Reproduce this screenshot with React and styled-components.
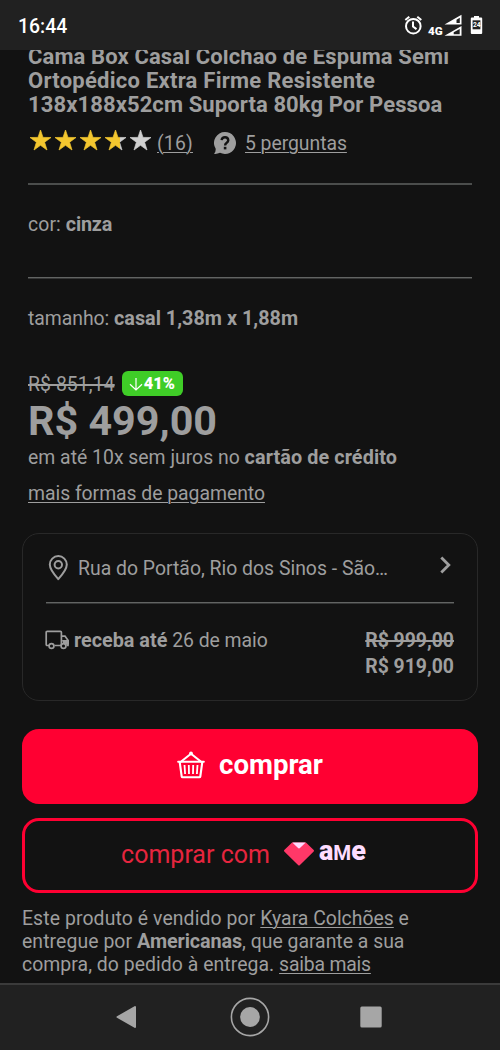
import styled, {createGlobalStyle} from "styled-components";

const GlobalStyle = createGlobalStyle`
    * {
        box-sizing: border-box;
    }

    body {
        margin: 0;
        background: #121212;
        color: #9e9e9e;
        font-family: Roboto, sans-serif;
        font-size: 19.4px;
    }
`;

const Screen = styled.div`
    display: flex;
    flex-direction: column;
    width: 500px;
    height: 1050px;
    overflow: hidden;
`;

const StatusBar = styled.header`
    display: flex;
    align-items: center;
    height: 50px;
    flex: none;
    padding: 2px 17px 0 18px;
    background: #212121;
    color: #fff;
`;

const Clock = styled.span`
    flex: 1;
    padding-top: 2px;
    font-size: 19.4px;
    font-weight: 500;
    line-height: 24px;
`;

const Main = styled.main`
    flex: 1;
    min-height: 0;
    overflow: hidden;
    padding: 0 22px;
`;

const Inner = styled.div`
    padding: 0 6px;
`;

const Title = styled.h1`
    margin: -5px 0 0;
    height: 71px;
    font-size: 22px;
    font-weight: 700;
    line-height: 24.2px;
    white-space: nowrap;
`;

const TitleLine = styled.span`
    display: block;
    letter-spacing: ${({$track}) => $track}px;
`;

const Text = styled.span`
    letter-spacing: ${({$track}) => $track || 0}px;
    white-space: pre;
`;

const Strong = styled(Text)`
    font-size: 19.8px;
    font-weight: 700;
`;

const Anchor = styled.a`
    color: inherit;
    letter-spacing: ${({$track}) => $track || 0}px;
    text-decoration: underline;
    text-decoration-thickness: 1px;
    text-underline-offset: 2px;
`;

const Rating = styled.div`
    display: flex;
    align-items: center;
    height: 26px;
    margin-top: 14px;
`;

const Stars = styled.svg`
    margin: 0 4px 6px 0;
`;

const Bubble = styled.svg`
    margin: 0 9px 0 21px;
`;

const Divider = styled.hr`
    height: 2px;
    margin: 0;
    border: 0;
    background: ${({$sharp}) => ($sharp ? "linear-gradient(#626463 50%, #353636 50%)" : "#4b4d4c")};
`;

const Attribute = styled.div`
    height: 92px;
    padding-top: 27px;
    line-height: 26px;
`;

const OldPrice = styled.div`
    display: flex;
    align-items: center;
    height: 25px;
`;

const Strike = styled(Text)`
    text-decoration: line-through;
    text-decoration-thickness: 1.5px;
`;

const OldValue = styled(Strike)`
    padding-top: 1px;
`;

const Discount = styled.span`
    display: flex;
    align-items: center;
    width: 61px;
    height: 25px;
    margin-left: 7px;
    padding-left: 7px;
    border-radius: 6px;
    background: #3fcd27;
    color: #fff;
    font-size: 16.4px;
    font-weight: 900;
`;

const Price = styled.div`
    height: 49px;
    padding-top: 1px;
    font-size: 41.3px;
    font-weight: 700;
    line-height: 49px;
    white-space: nowrap;
`;

const Installments = styled.div`
    line-height: 26px;
    white-space: nowrap;
`;

const PaymentLink = styled.div`
    margin-top: 10px;
    line-height: 26px;
`;

const Card = styled.section`
    height: 168px;
    margin-top: 26px;
    padding: 0 23px;
    border: 1.5px solid #282828;
    border-radius: 17px;
`;

const Address = styled.div`
    display: flex;
    align-items: center;
    height: 68px;
    white-space: nowrap;
`;

const Street = styled.span`
    flex: 1;
    margin-left: 8px;
`;

const Shipping = styled.div`
    display: flex;
    align-items: flex-start;
    padding-top: 24px;
    line-height: 26px;
`;

const ShippingDate = styled.div`
    flex: 1;
    margin-left: 5px;
    white-space: nowrap;
`;

const Prices = styled.div`
    display: flex;
    flex-direction: column;
    font-weight: 700;
`;

const Button = styled.button`
    display: flex;
    align-items: center;
    justify-content: center;
    width: 100%;
    height: 75px;
    padding: 0 ${({$solid}) => ($solid ? 0 : 13)}px 3px 0;
    border: 3px solid #ff0032;
    border-radius: 17px;
    background: ${({$solid}) => ($solid ? "#ff0032" : "transparent")};
    color: ${({$solid}) => ($solid ? "#fff" : "#e6253e")};
    font-family: inherit;
    font-size: ${({$solid}) => ($solid ? 27.6 : 25)}px;
    font-weight: ${({$solid}) => ($solid ? 700 : 400)};
`;

const Actions = styled.div`
    display: grid;
    gap: 14px;
    margin-top: 28px;
`;

const BuyLabel = styled.span`
    margin: -2px 0 0 14px;
`;

const AmeLogo = styled.span`
    display: flex;
    align-items: center;
    margin: 0 0 0 13px;
    color: #fddcff;
`;

const Wordmark = styled.span`
    margin: -4px 0 0 4px;
    font-size: 27px;
    font-weight: 900;
    line-height: 26px;
`;

const WordmarkCap = styled.span`
    font-size: 20.5px;
    font-weight: 700;
`;

const Seller = styled.p`
    margin: 14px 0 0;
    line-height: 23px;
    white-space: nowrap;
`;

const NavBar = styled.nav`
    display: flex;
    align-items: center;
    flex: none;
    height: 67px;
    padding: 0 118px 2px 116px;
    justify-content: space-between;
    border-top: 2px solid #3b3b3b;
    background: #212121;
`;

const HomeButton = styled.svg`
    margin-left: 2px;
`;

const Chevron = styled.svg`
    margin-top: -7px;
`;

const Truck = styled.svg`
    margin-top: 2px;
`;

const starPath = "M10.5 0l2.5 7.4 8 .1-6.4 4.7 2.4 7.8-6.5-4.7-6.5 4.7 2.4-7.8L0 7.5l8-.1z";

const StatusIcons = () => (
    <svg width="70" height="24" viewBox="413 14 70 24" overflow="visible" fill="none">
        <g stroke="#fff" strokeWidth="2">
            <circle cx="413.3" cy="26.2" r="7.3" />
            <path d="M413 21.5v5l3.500 2.600M405.300 20l4-3.300M421.300 20l-4-3.300" />
        </g>
        <text x="428" y="34.6" fill="#fff" fontSize="11.6" fontWeight="900">4G</text>
        <path fill="#fff" fillRule="evenodd" d="M444.500 24.500L461.500 14.700v9.800zM456.500 23h3.300v-5.200l-3.300 1.900z" />
        <path fill="#fff" fillRule="evenodd" d="M444.500 35.700L461.500 26v9.700zM453.700 34.200h6v-5.300l-6 3.400z" />
        <path fill="#fff" d="M474 16h5v1.500h2.200q1 0 1 1V33q0 1-1 1h-9.400q-1 0-1-1V18.500q0-1 1-1h2.200z" />
        <path fill="#212121" d="M472.600 20.300h7.800v9h-7.800z" />
        <text x="472.9" y="27.400" fill="#fff" fontSize="6.7" fontWeight="700">24</text>
    </svg>
);

const StarRow = () => (
    <Stars width="125" height="22" viewBox="0 0 125 22">
        <defs>
            <linearGradient id="partial">
                <stop offset="0.7" stopColor="#f4c72f" />
                <stop offset="0.7" stopColor="#cfcfcf" />
            </linearGradient>
        </defs>
        {["#f4c72f", "#f4c72f", "#f4c72f", "url(#partial)", "#d0d0d0"].map((fill, i) => (
            <path
                key={i}
                d={starPath}
                fill={fill}
                stroke={fill}
                strokeWidth="0.7"
                transform={`translate(${2 + i * 25} 1)`}
            />
        ))}
    </Stars>
);

const QuestionIcon = () => (
    <Bubble width="22" height="22" viewBox="0 0 22 22">
        <path fill="#9e9e9e" d="M11 0a11 11 0 1 1-5 20.800Q3 22.200 0 21.800q2-2 1.600-5.200A11 11 0 0 1 11 0z" />
        <path
            fill="none"
            stroke="#121212"
            strokeWidth="2.4"
            d="M7.600 8.200Q8 5.200 11 5.200T14.300 8.300Q14.300 9.800 12.500 11Q11.100 12 11.100 13.400"
        />
        <path fill="#121212" d="M9.800 14.800h2.600v2.600H9.800z" />
    </Bubble>
);

const PinIcon = () => (
    <svg width="24" height="26" viewBox="0 0 24 26" fill="none" stroke="#9e9e9e">
        <path strokeWidth="2" strokeLinejoin="round" d="M12.300 24.200Q3.800 14.800 3.800 9.600a8.500 8.500 0 0 1 17 0Q20.800 14.800 12.300 24.200z" />
        <circle cx="12.3" cy="9.7" r="3.7" strokeWidth="2" />
    </svg>
);

const ChevronIcon = () => (
    <Chevron width="15" height="18" viewBox="0 0 15 18" fill="none" stroke="#9e9e9e">
        <path strokeWidth="2.8" d="M2.300 1.500L9.800 9l-7.500 7.500" />
    </Chevron>
);

const TruckIcon = () => (
    <Truck width="23" height="20" viewBox="0 0 23 20" overflow="visible" fill="none" stroke="#9e9e9e">
        <path strokeWidth="1.7" d="M3.500 15.500H1.200Q.2 15.500.2 14.500V2.300q0-1 1-1h13.200q1 0 1 1V15.500H8.500" />
        <path strokeWidth="1.7" d="M15.500 6.200h3.500l3 4v5.300h-1.500" />
        <path fill="#9e9e9e" stroke="none" d="M16 10h7v4.500l-2 .5-4-2z" />
        <circle cx="5.5" cy="16" r="2.4" fill="#121212" strokeWidth="1.7" />
        <circle cx="17.5" cy="16" r="2.4" fill="#121212" strokeWidth="1.7" />
    </Truck>
);

const BasketIcon = () => (
    <svg width="28" height="28" viewBox="0 0 28 28" fill="none" stroke="#fff" strokeLinejoin="round" strokeLinecap="round">
        <path strokeWidth="2.1" d="M1.200 10.800h25.600M2.700 11l2 14.500q.1.800 1 .8h16.600q.9 0 1-.8L25.300 11" />
        <path strokeWidth="2.1" d="M4.500 10.300L14 2.800l9.500 7.500" />
        <circle cx="14" cy="2.4" r="1.9" fill="#fff" stroke="none" />
        <path strokeWidth="1.8" strokeLinecap="butt" d="M7.500 14l.6 9M11.800 14l.2 9M16.200 14l-.2 9M20.500 14l-.6 9" />
    </svg>
);

const HeartIcon = () => (
    <svg width="32" height="24" viewBox="0 0 32 24">
        <path
            fill="#ff3868"
            stroke="#ff3868"
            strokeWidth="2"
            strokeLinejoin="round"
            d="M9.500 1.500h13L30 8.700 16 22.500 2 8.700z"
        />
        <path fill="#fddcff" d="M9.300.5h13.400l-5.500 5.300q-1.200 1.200-2.400 0z" />
    </svg>
);

export default function App() {
    return (
        <Screen>
            <GlobalStyle />
            <StatusBar>
                <Clock>16:44</Clock>
                <StatusIcons />
            </StatusBar>
            <Main>
                <Inner>
                    <Title>
                        <TitleLine $track={0.12}>Cama Box Casal Colchão de Espuma Semi</TitleLine>
                        <TitleLine $track={0.25}>Ortopédico Extra Firme Resistente</TitleLine>
                        <TitleLine $track={0.1}>138x188x52cm Suporta 80kg Por Pessoa</TitleLine>
                    </Title>
                    <Rating>
                        <StarRow />
                        <Anchor $track={0.2}>(16)</Anchor>
                        <QuestionIcon />
                        <Anchor $track={-0.05}>5 perguntas</Anchor>
                    </Rating>
                    <Divider style={{marginTop: 27}} />
                    <Attribute>
                        <Text $track={0.1}>cor: </Text>
                        <Strong $track={-0.2}>cinza</Strong>
                    </Attribute>
                    <Divider $sharp />
                    <Attribute>
                        <Text $track={-0.05}>tamanho: </Text>
                        <Strong $track={0.02}>casal 1,38m x 1,88m</Strong>
                    </Attribute>
                    <OldPrice>
                        <OldValue $track={0.08}>R$ 851,14</OldValue>
                        <Discount>
                            <svg width="15" height="16" viewBox="0 0 15 16" fill="none" stroke="#fff" strokeWidth="1.2">
                                <path d="M7 2v12M1 8.200l6 5.800 6-5.800" />
                            </svg>
                            <Text>41%</Text>
                        </Discount>
                    </OldPrice>
                    <Price>R$ 499,00</Price>
                    <Installments>
                        <Text>em até 10x sem juros no </Text>
                        <Strong $track={0.1}>cartão de crédito</Strong>
                    </Installments>
                    <PaymentLink>
                        <Anchor $track={-0.04}>mais formas de pagamento</Anchor>
                    </PaymentLink>
                </Inner>
                <Card>
                    <Address>
                        <PinIcon />
                        <Street>Rua do Portão, Rio dos Sinos - São…</Street>
                        <ChevronIcon />
                    </Address>
                    <Divider $sharp />
                    <Shipping>
                        <TruckIcon />
                        <ShippingDate>
                            <Strong>receba até </Strong>
                            <Text $track={-0.05}>26 de maio</Text>
                        </ShippingDate>
                        <Prices>
                            <Strike>R$ 999,00</Strike>
                            <Text>R$ 919,00</Text>
                        </Prices>
                    </Shipping>
                </Card>
                <Actions>
                    <Button $solid>
                        <BasketIcon />
                        <BuyLabel>comprar</BuyLabel>
                    </Button>
                    <Button>
                        <Text>comprar com</Text>
                        <AmeLogo>
                            <HeartIcon />
                            <Wordmark>
                                a<WordmarkCap>M</WordmarkCap>e
                            </Wordmark>
                        </AmeLogo>
                    </Button>
                </Actions>
                <Seller>
                    <Text $track={0.1}>Este produto é vendido por </Text>
                    <Anchor>Kyara Colchões</Anchor> e<br />
                    <Text $track={0.08}>entregue por </Text>
                    <Strong $track={-0.1}>Americanas</Strong>, que garante a sua
                    <br />
                    <Text $track={0.05}>compra, do pedido à entrega. </Text>
                    <Anchor $track={-0.2}>saiba mais</Anchor>
                </Seller>
            </Main>
            <NavBar>
                <svg width="21" height="24" viewBox="0 0 21 24">
                    <path fill="#a6a6a6" stroke="#a6a6a6" strokeWidth="2" strokeLinejoin="round" d="M1.500 12L19 2v20z" />
                </svg>
                <HomeButton width="40" height="40" viewBox="0 0 40 40">
                    <circle cx="20" cy="20" r="18.6" fill="none" stroke="#a6a6a6" strokeWidth="1.6" />
                    <circle cx="20" cy="20" r="9.9" fill="#a6a6a6" />
                </HomeButton>
                <svg width="22" height="22" viewBox="0 0 22 22">
                    <rect x="0.3" y="0.5" width="21.4" height="21" rx="1.5" fill="#a6a6a6" />
                </svg>
            </NavBar>
        </Screen>
    );
}
